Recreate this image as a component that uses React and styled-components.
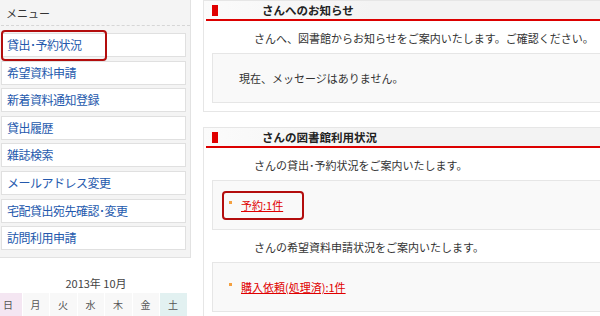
import React from 'react'
import styled, { createGlobalStyle } from 'styled-components'

const Global = createGlobalStyle`
  body {
    margin: 0;
    background: #fff;
    font-family: "Noto Sans CJK JP", "Liberation Sans", sans-serif;
  }
`

const menu = [
  '貸出･予約状況',
  '希望資料申請',
  '新着資料通知登録',
  '貸出履歴',
  '雑誌検索',
  'メールアドレス変更',
  '宅配貸出宛先確認･変更',
  '訪問利用申請',
]

const days = [
  { d: '日', bg: '#f4e6f2' },
  { d: '月' },
  { d: '火' },
  { d: '水' },
  { d: '木' },
  { d: '金' },
  { d: '土', bg: '#e2f1f1' },
]

const App = () => {
  return (
    <>
      <Global />
      <Page>
        <Sidebar>
          <MenuPanel>
            <MenuHead>メニュー</MenuHead>
            <MenuList>
              {menu.map((m, i) => (
                <MenuItem key={m}>
                  {m}
                  {i === 0 && <Mark $w={106} $top={-4} $left={-1} $h={31} />}
                </MenuItem>
              ))}
            </MenuList>
          </MenuPanel>
          <CalTitle>2013年 10月</CalTitle>
          <CalRow>
            {days.map((c) => (
              <CalCell key={c.d} $bg={c.bg}>{c.d}</CalCell>
            ))}
          </CalRow>
        </Sidebar>

        <Main>
          <Panel>
            <PanelHead>
              <RedBar />
              <Title>さんへのお知らせ</Title>
            </PanelHead>
            <RedLine />
            <Lead>さんへ、図書館からお知らせをご案内いたします。ご確認ください。</Lead>
            <Box>
              <BoxText>現在、メッセージはありません。</BoxText>
            </Box>
          </Panel>

          <Panel>
            <PanelHead>
              <RedBar />
              <Title>さんの図書館利用状況</Title>
            </PanelHead>
            <RedLine />
            <Lead>さんの貸出･予約状況をご案内いたします。</Lead>
            <Box>
              <LinkRow>
                <Bullet />
                <Link href="#">予約:1件</Link>
                <Mark $w={82} $top={-6} $left={-7} $h={29} />
              </LinkRow>
            </Box>
            <Lead>さんの希望資料申請状況をご案内いたします。</Lead>
            <Box>
              <LinkRow>
                <Bullet />
                <Link href="#">購入依頼(処理済):1件</Link>
              </LinkRow>
            </Box>
          </Panel>
        </Main>
      </Page>
    </>
  )
}

export default App

const Page = styled.div`
  display: flex;
  width: 600px;
  height: 316px;
  overflow: hidden;
`

const Sidebar = styled.div`
  width: 196px;
  margin-left: -5px;
  flex-shrink: 0;
`

const MenuPanel = styled.div`
  background: #f4f4f4;
  border: 1px solid #e2e2e2;
  border-top: none;
  padding: 0 4px 7px 5px;
`

const MenuHead = styled.div`
  height: 25px;
  line-height: 27px;
  padding-left: 5px;
  font-size: 11px;
  color: #333;
  border-bottom: 1px dashed #d6d6d6;
  margin-right: -4px;
`

const MenuList = styled.div`
  display: flex;
  flex-direction: column;
  gap: 3.6px;
  padding-top: 7px;
`

const MenuItem = styled.div`
  position: relative;
  height: 22px;
  line-height: 22px;
  background: #fff;
  border: 1px solid #e0e0e0;
  padding-left: 5px;
  font-size: 12px;
  letter-spacing: -0.5px;
  color: #2459ad;
`

const Mark = styled.span`
  position: absolute;
  top: ${(p) => p.$top}px;
  left: ${(p) => p.$left}px;
  width: ${(p) => p.$w}px;
  height: ${(p) => p.$h}px;
  border: 2px solid #b30d0d;
  border-radius: 4px;
  box-sizing: border-box;
  pointer-events: none;
`

const CalTitle = styled.div`
  margin-top: 18px;
  line-height: 14px;
  text-align: center;
  font-size: 11px;
  color: #444;
  padding-left: 6px;
`

const CalRow = styled.div`
  display: grid;
  grid-template-columns: repeat(7, 27.5px);
  margin-top: 3px;
`

const CalCell = styled.div`
  height: 24px;
  line-height: 24px;
  padding-left: 8px;
  font-size: 10px;
  color: #555;
  background: ${(p) => p.$bg || '#f8f8f8'};
  border-right: 1px solid #fff;
`

const Main = styled.div`
  margin-left: 12px;
  display: flex;
  flex-direction: column;
  gap: 15px;
`

const Panel = styled.div`
  width: 420px;
  border: 1px solid #e6e6e6;
  border-right: none;
  background: #fff;
  padding-bottom: 8px;
`

const PanelHead = styled.div`
  display: flex;
  align-items: center;
  height: 18px;
  background: linear-gradient(to right, #fbfbfb, #f3f3f3 40%);
  padding-left: 8px;
`

const RedBar = styled.span`
  width: 6px;
  height: 11px;
  background: #e00000;
`

const Title = styled.span`
  margin-left: 44px;
  font-size: 11.5px;
  font-weight: bold;
  color: #222;
`

const RedLine = styled.div`
  height: 2px;
  margin-left: 2px;
  background: #dc0000;
`

const Lead = styled.div`
  margin-top: 10px;
  padding-left: 50px;
  line-height: 14px;
  font-size: 11px;
  color: #333;
`

const Box = styled.div`
  margin: 8px 0 0 8px;
  height: 48px;
  display: flex;
  align-items: center;
  background: #f9f9f9;
  border: 1px solid #e6e6e6;
  border-right: none;
`

const BoxText = styled.span`
  padding-left: 26px;
  font-size: 11px;
  color: #333;
`

const LinkRow = styled.div`
  position: relative;
  display: flex;
  align-items: center;
  margin-left: 16px;
  gap: 9px;
`

const Bullet = styled.span`
  width: 3px;
  height: 3px;
  background: #f4a040;
  margin-top: -5px;
`

const Link = styled.a`
  font-size: 11px;
  color: #e00000;
  text-decoration: underline;
`
